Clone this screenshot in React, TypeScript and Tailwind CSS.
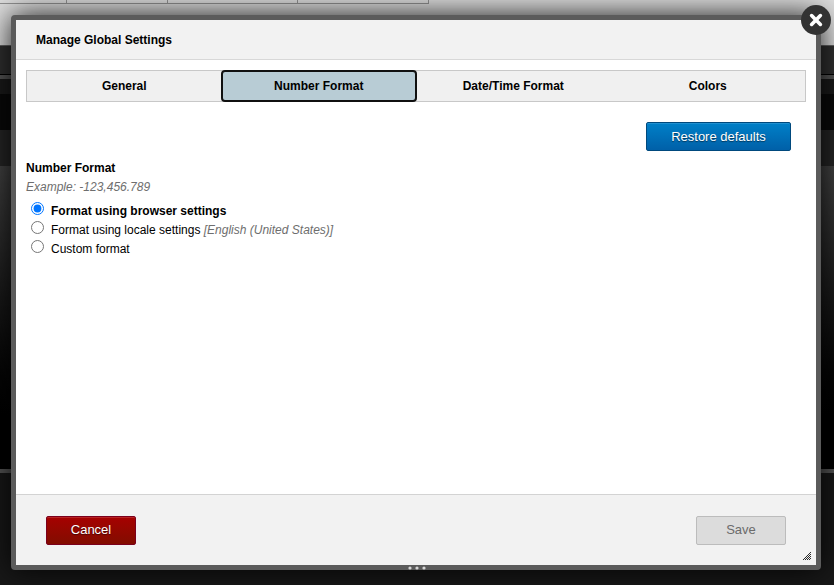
import { useState } from 'react'

const TABS = ['General', 'Number Format', 'Date/Time Format', 'Colors']

const FORMATS = [
  { id: 'browser', label: 'Format using browser settings' },
  { id: 'locale', label: 'Format using locale settings', hint: '[English (United States)]' },
  { id: 'custom', label: 'Custom format' },
]

export default function App() {
  return (
    <div className="relative flex h-screen flex-col overflow-hidden bg-[#141414] font-['Liberation_Sans',Arial,sans-serif] text-xs text-black">
      <Backdrop />
      <div className="absolute inset-0 flex pt-[15px] pr-[13px] pb-[15px] pl-[11px]">
        <SettingsDialog />
      </div>
    </div>
  )
}

/** The dimmed application behind the dialog */
function Backdrop() {
  return (
    <div aria-hidden="true" className="flex flex-1 flex-col">
      <div className="h-[45px] bg-[#dedede]">
        <div className="flex h-1">
          <div className="w-[67px] border-r border-b border-[#929292]" />
          <div className="w-[101px] border-r border-b border-[#929292]" />
          <div className="w-[130px] border-r border-b border-[#929292]" />
          <div className="w-[131px] border-r border-b border-[#929292]" />
        </div>
      </div>
      <div className="h-[30px] border-t border-b border-t-[#666] border-b-black bg-[#303030]" />
      <div className="h-1 bg-[#555]" />
      <div className="h-[15px] bg-[#1a1a1a]" />
      <div className="h-9 bg-[#090909]" />
      <div className="h-9 bg-[#252525]" />
      <div className="flex-1 bg-linear-to-b from-[#424242] to-black" />
      <div className="h-1 bg-[#555]" />
      <div className="h-28 bg-[#181818]" />
    </div>
  )
}

function SettingsDialog() {
  const [tab, setTab] = useState('Number Format')
  const [format, setFormat] = useState('browser')

  return (
    <section
      role="dialog"
      aria-labelledby="dialog-title"
      className="relative flex flex-1 flex-col rounded border-[5px] border-[#5b5b5b] bg-white shadow-[0_0_30px_#000000e6]"
    >
      <header className="flex h-10 items-center border-b border-[#d8d8d8] bg-[#f2f2f2] px-5">
        <h1 id="dialog-title" className="font-bold">
          Manage Global Settings
        </h1>
      </header>

      <div className="flex-1 p-[10px]">
        <div role="tablist" className="flex h-8 border border-[#c8c8c8] bg-[#f0f0f0]">
          {TABS.map((name) => (
            <button
              key={name}
              type="button"
              role="tab"
              aria-selected={tab === name}
              onClick={() => setTab(name)}
              className={`flex-1 font-bold ${
                tab === name
                  ? 'rounded-[3px] bg-[#b8ccd5] outline-2 -outline-offset-1 outline-[#101010]'
                  : 'outline-none'
              }`}
            >
              {name}
            </button>
          ))}
        </div>

        <div className="flex justify-end pt-5 pr-[15px]">
          <button
            type="button"
            className="h-[29px] w-[145px] rounded-xs border border-[#00497d] bg-linear-to-b from-[#0080c8] to-[#0060a8] text-[13px] text-white shadow-[inset_0_1px_0_#2090d0] text-shadow-[0_1px_1px_#00000080]"
          >
            Restore defaults
          </button>
        </div>

        <div role="radiogroup" aria-labelledby="format-title" className="pt-2">
          <h2 id="format-title" className="leading-[19px] font-bold">
            Number Format
          </h2>
          <p className="leading-[19px] text-[#6e6e6e] italic">Example: -123,456.789</p>
          <div className="pt-[5px] pl-[5px]">
            {FORMATS.map(({ id, label, hint }) => (
              <div key={id} className="flex h-[19px] items-start gap-[7px]">
                <input
                  type="radio"
                  id={id}
                  name="number-format"
                  checked={format === id}
                  onChange={() => setFormat(id)}
                  className="size-[13px]"
                />
                <label
                  htmlFor={id}
                  className={`leading-[19px] ${format === id ? 'font-bold' : ''}`}
                >
                  {label}
                  {hint && <span className="text-[#6e6e6e] italic"> {hint}</span>}
                </label>
              </div>
            ))}
          </div>
        </div>
      </div>

      <footer className="flex h-[71px] items-center justify-between border-t border-[#d3d3d3] bg-[#f2f2f2] px-[30px]">
        <button
          type="button"
          className="h-[29px] w-[90px] rounded-xs border border-[#7b001c] bg-linear-to-b from-[#a60000] to-[#820c00] text-[13px] text-white shadow-[inset_0_1px_0_#b82424] text-shadow-[0_1px_1px_#00000080]"
        >
          Cancel
        </button>
        <button
          type="button"
          disabled
          className="h-[29px] w-[90px] rounded-xs border border-[#bcbcbc] bg-[#dcdcdc] text-[13px] text-[#6b6b6b]"
        >
          Save
        </button>
      </footer>

      <svg
        viewBox="0 0 8 8"
        className="absolute right-[5px] bottom-[5px] size-2"
        fill="none"
        stroke="#2c2c2c"
        strokeWidth="1"
        aria-hidden="true"
      >
        <path d="M0 8 8 0M2 8 8 2M4 8 8 4M6 8 8 6" />
      </svg>

      {/* Grip on the lower frame */}
      <svg
        viewBox="0 0 18 4"
        className="absolute -bottom-[5px] left-1/2 h-1 w-[18px] -translate-x-2"
        fill="#d6d6d6"
        aria-hidden="true"
      >
        <circle cx="2" cy="2" r="1.6" />
        <circle cx="9" cy="2" r="1.6" />
        <circle cx="16" cy="2" r="1.6" />
      </svg>

      <button
        type="button"
        aria-label="Close"
        className="absolute -top-[15px] -right-[15px] flex size-[30px] items-center justify-center rounded-full bg-[#333]"
      >
        <svg
          viewBox="0 0 14 14"
          className="size-[14px]"
          stroke="white"
          strokeWidth="3.6"
          strokeLinecap="round"
          aria-hidden="true"
        >
          <path d="M2.6 2.6 11.4 11.4M11.4 2.6 2.6 11.4" />
        </svg>
      </button>
    </section>
  )
}
